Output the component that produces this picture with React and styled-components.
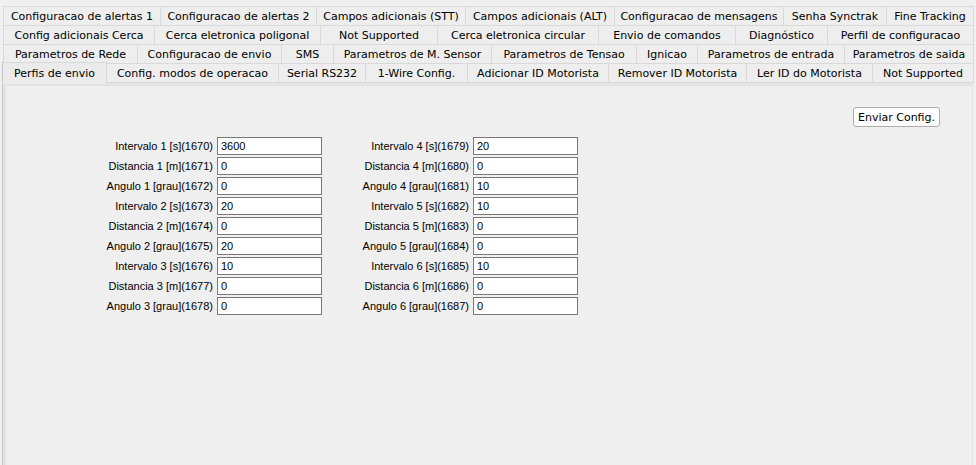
import React from "react"
import styled, { createGlobalStyle } from "styled-components"

const GlobalStyle = createGlobalStyle`
  html, body {
    margin: 0;
    padding: 0;
    background: #f0f0f0;
    overflow: hidden;
  }
`

const tabRows = [
  [
    ["Configuracao de alertas 1", 157],
    ["Configuracao de alertas 2", 156],
    ["Campos adicionais (STT)", 149],
    ["Campos adicionais (ALT)", 149],
    ["Configuracao de mensagens", 169],
    ["Senha Synctrak", 103],
    ["Fine Tracking", 87],
  ],
  [
    ["Config adicionais Cerca", 151],
    ["Cerca eletronica poligonal", 166],
    ["Not Supported", 117],
    ["Cerca eletronica circular", 161],
    ["Envio de comandos", 137],
    ["Diagnóstico", 92],
    ["Perfil de configuracao", 146],
  ],
  [
    ["Parametros de Rede", 134],
    ["Configuracao de envio", 144],
    ["SMS", 52],
    ["Parametros de M. Sensor", 158],
    ["Parametros de Tensao", 145],
    ["Ignicao", 61],
    ["Parametros de entrada", 147],
    ["Parametros de saida", 129],
  ],
  [
    ["Perfis de envio", 103],
    ["Config. modos de operacao", 172],
    ["Serial RS232", 87],
    ["1-Wire Config.", 102],
    ["Adicionar ID Motorista", 141],
    ["Remover ID Motorista", 138],
    ["Ler ID do Motorista", 126],
    ["Not Supported", 101],
  ],
]

const leftFields = [
  ["Intervalo 1 [s](1670)", "3600"],
  ["Distancia 1 [m](1671)", "0"],
  ["Angulo 1 [grau](1672)", "0"],
  ["Intervalo 2 [s](1673)", "20"],
  ["Distancia 2 [m](1674)", "0"],
  ["Angulo 2 [grau](1675)", "20"],
  ["Intervalo 3 [s](1676)", "10"],
  ["Distancia 3 [m](1677)", "0"],
  ["Angulo 3 [grau](1678)", "0"],
]

const rightFields = [
  ["Intervalo 4 [s](1679)", "20"],
  ["Distancia 4 [m](1680)", "0"],
  ["Angulo 4 [grau](1681)", "10"],
  ["Intervalo 5 [s](1682)", "10"],
  ["Distancia 5 [m](1683)", "0"],
  ["Angulo 5 [grau](1684)", "0"],
  ["Intervalo 6 [s](1685)", "10"],
  ["Distancia 6 [m](1686)", "0"],
  ["Angulo 6 [grau](1687)", "0"],
]

const Window = styled.div`
  width: 976px;
  height: 465px;
  display: flex;
  flex-direction: column;
  padding: 6px 3px 0 3px;
  box-sizing: border-box;
  background: #f0f0f0;
  font-family: "DejaVu Sans", "Liberation Sans", sans-serif;
`

const TabStrip = styled.div`
  display: flex;
  flex-direction: column;
`

const TabRow = styled.div`
  display: flex;
  height: 20px;
  margin-top: ${(p) => (p.$first ? "0" : "-1px")};
  position: relative;
  z-index: ${(p) => (p.$active ? 2 : 1)};
`

const Tab = styled.div`
  flex: 0 0 ${(p) => p.$width + 1}px;
  margin-left: ${(p) => (p.$first ? "0" : "-1px")};
  box-sizing: border-box;
  border: 1px solid #d9d9d9;
  background: #eeeeee;
  display: flex;
  align-items: center;
  justify-content: center;
  font-size: 11px;
  color: #000;
  white-space: nowrap;
  overflow: hidden;
  ${(p) =>
    p.$selected &&
    `
    border-bottom-color: transparent;
    border-left-color: #c6c6c6;
    margin-top: -1px;
    height: 22px;
    margin-left: -1px;
    flex-basis: ${p.$width + 2}px;
    background: #ebebeb;
  `}
`

const ContentFrame = styled.div`
  flex: 1;
  margin: 0 0 0 -1px;
  border-left: 1px solid #c6c6c6;
  background: #e4e4e4;
  padding: 3px 1px 0 3px;
  display: flex;
`

const Panel = styled.div`
  flex: 1;
  background: #efefef;
  display: flex;
  flex-direction: column;
  padding: 21px 32px 0 97px;
`

const Toolbar = styled.div`
  display: flex;
  justify-content: flex-end;
  margin-bottom: 10px;
`

const Button = styled.button`
  width: 87px;
  height: 20px;
  border: 1px solid #adadad;
  border-radius: 3px;
  background: #fdfdfd;
  font-family: "DejaVu Sans", "Liberation Sans", sans-serif;
  font-size: 11px;
  color: #000;
  padding: 0;
  cursor: pointer;
`

const Form = styled.div`
  display: flex;
  gap: 37px;
`

const FieldColumn = styled.div`
  display: grid;
  grid-template-columns: 110px 105px;
  column-gap: 4px;
  row-gap: 2px;
  align-items: center;
`

const Label = styled.label`
  font-family: "Liberation Sans", Arial, sans-serif;
  font-size: 11px;
  color: #000;
  text-align: right;
  white-space: nowrap;
`

const Input = styled.input`
  box-sizing: border-box;
  width: 105px;
  height: 18px;
  border: 1px solid #7a7a7a;
  background: #fff;
  padding: 0 3px;
  font-family: "Liberation Sans", Arial, sans-serif;
  font-size: 11px;
  color: #000;
  outline: none;
`

const Fields = ({ items }) => (
  <FieldColumn>
    {items.map(([label, value]) => (
      <React.Fragment key={label}>
        <Label>{label}</Label>
        <Input defaultValue={value} />
      </React.Fragment>
    ))}
  </FieldColumn>
)

const App = () => {
  return (
    <>
      <GlobalStyle />
      <Window>
        <TabStrip>
          {tabRows.map((row, r) => (
            <TabRow key={r} $first={r === 0} $active={r === 3}>
              {row.map(([name, width], i) => (
                <Tab
                  key={name + i}
                  $width={width}
                  $first={i === 0}
                  $selected={r === 3 && i === 0}
                >
                  {name}
                </Tab>
              ))}
            </TabRow>
          ))}
        </TabStrip>
        <ContentFrame>
          <Panel>
            <Toolbar>
              <Button>Enviar Config.</Button>
            </Toolbar>
            <Form>
              <Fields items={leftFields} />
              <Fields items={rightFields} />
            </Form>
          </Panel>
        </ContentFrame>
      </Window>
    </>
  )
}

export default App
